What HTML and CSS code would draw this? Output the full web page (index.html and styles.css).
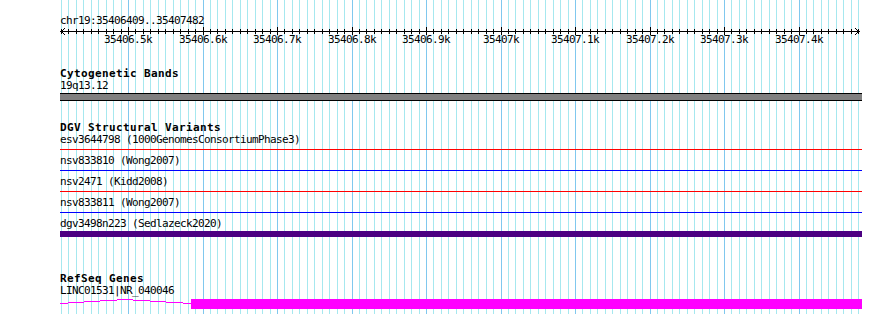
FILE: index.html
```html
<!DOCTYPE html>
<html lang="en">
<head>
  <meta charset="UTF-8" />
  <meta name="viewport" content="width=device-width, initial-scale=1.0" />
  <title>chr19:35406409..35407482</title>
  <link rel="stylesheet" href="styles.css">
</head>

<body>
  <div class="panel">
    <svg class="grid" id="grid" width="802" height="314"></svg>

    <div class="ruler">
      <div class="locus">chr19:35406409..35407482</div>
      <svg class="axis" id="axis" width="802" height="20">
        <line x1="0" y1="4.5" x2="800" y2="4.5" />
        <polyline points="5,1 1,4.5 5,8" />
        <polyline points="795,1 799,4.5 795,8" />
      </svg>
    </div>

    <div class="track cyto">
      <div class="track-title">Cytogenetic Bands</div>
      <div class="feat-label">19q13.12</div>
      <div class="band"></div>
    </div>

    <div class="track dgv">
      <div class="track-title">DGV Structural Variants</div>
      <div class="sv">
        <div class="feat-label">esv3644798 (1000GenomesConsortiumPhase3)</div>
        <div class="sv-line loss"></div>
      </div>
      <div class="sv">
        <div class="feat-label">nsv833810 (Wong2007)</div>
        <div class="sv-line gain"></div>
      </div>
      <div class="sv">
        <div class="feat-label">nsv2471 (Kidd2008)</div>
        <div class="sv-line loss"></div>
      </div>
      <div class="sv">
        <div class="feat-label">nsv833811 (Wong2007)</div>
        <div class="sv-line gain"></div>
      </div>
      <div class="sv">
        <div class="feat-label">dgv3498n223 (Sedlazeck2020)</div>
        <div class="sv-bar"></div>
      </div>
    </div>

    <div class="track refseq">
      <div class="track-title">RefSeq Genes</div>
      <div class="feat-label gene-label">LINC01531|NR_040046</div>
      <svg class="gene" width="802" height="10">
        <polyline class="intron" points="0,4.5 65,0.5 131,4.5" />
        <rect class="exon" x="131" y="0" width="671" height="10" />
      </svg>
    </div>
  </div>

  <script>
    const NS = 'http://www.w3.org/2000/svg';
    const grid = document.getElementById('grid');
    const axis = document.getElementById('axis');
    // 35406500 sits at x=68.5 in the panel, 100 bp = 74.5 px
    const scale = 0.745;
    const origin = 68.5;

    for (let b = 35406410; b <= 35407480; b += 10) {
      const x = Math.floor(origin + (b - 35406500) * scale);
      const major = b % 100 === 0;

      const line = document.createElementNS(NS, 'rect');
      line.setAttribute('x', x);
      line.setAttribute('y', 0);
      line.setAttribute('width', 1);
      line.setAttribute('height', 314);
      line.setAttribute('class', major ? 'major' : 'minor');
      grid.appendChild(line);

      const tick = document.createElementNS(NS, 'rect');
      tick.setAttribute('x', x);
      tick.setAttribute('y', major ? 0 : 2);
      tick.setAttribute('width', 1);
      tick.setAttribute('height', major ? 8 : 5);
      axis.appendChild(tick);

      if (major) {
        const label = document.createElementNS(NS, 'text');
        label.setAttribute('x', x);
        label.setAttribute('y', 16);
        label.textContent = (b / 1000) + 'k';
        axis.appendChild(label);
      }
    }
  </script>
</body>
</html>
```

FILE: styles.css
```css
body {
  margin: 0;
  background-color: white;
  color: black;
  font-family: "DejaVu Sans Mono", monospace;
}

.panel {
  position: relative;
  width: 802px;
  height: 314px;
  margin-left: 60px;
  overflow: hidden;
}

.grid {
  position: absolute;
  top: 0;
  left: 0;
  z-index: 0;
  shape-rendering: crispEdges;
}

.grid .minor {
  fill: #a6e8ef;
}

.grid .major {
  fill: #80c8ee;
}

.ruler,
.track {
  position: relative;
  z-index: 1;
}

.ruler {
  padding-top: 15px;
}

.locus,
.feat-label {
  font-size: 11px;
  letter-spacing: -0.62px;
  line-height: 12px;
  white-space: nowrap;
}

.axis {
  display: block;
  shape-rendering: crispEdges;
}

.axis line,
.axis polyline {
  stroke: black;
  stroke-width: 1;
  fill: none;
}

.axis rect {
  fill: black;
}

.axis text {
  font-family: "DejaVu Sans Mono", monospace;
  font-size: 11px;
  letter-spacing: -0.62px;
  text-anchor: middle;
  fill: black;
}

.track-title {
  font-size: 11px;
  font-weight: bold;
  letter-spacing: 0.38px;
  line-height: 12px;
  white-space: nowrap;
}

.cyto {
  margin-top: 21px;
}

.band {
  margin-top: 1px;
  height: 6px;
  background-color: #808080;
  border-top: 1px solid black;
  border-bottom: 1px solid black;
}

.dgv {
  margin-top: 21px;
}

.sv {
  height: 21px;
}

.sv-line {
  margin-top: 3px;
  height: 1px;
}

.sv-line.loss {
  background-color: #ff0000;
}

.sv-line.gain {
  background-color: #0000ff;
}

.sv-bar {
  margin-top: 1px;
  height: 6px;
  background-color: #4b0082;
}

.refseq {
  margin-top: 34px;
}

.gene-label {
  margin-bottom: 2px;
}

.gene {
  display: block;
  shape-rendering: crispEdges;
}

.gene .intron {
  fill: none;
  stroke: #ff00ff;
  stroke-width: 1;
}

.gene .exon {
  fill: #ff00ff;
}
```
